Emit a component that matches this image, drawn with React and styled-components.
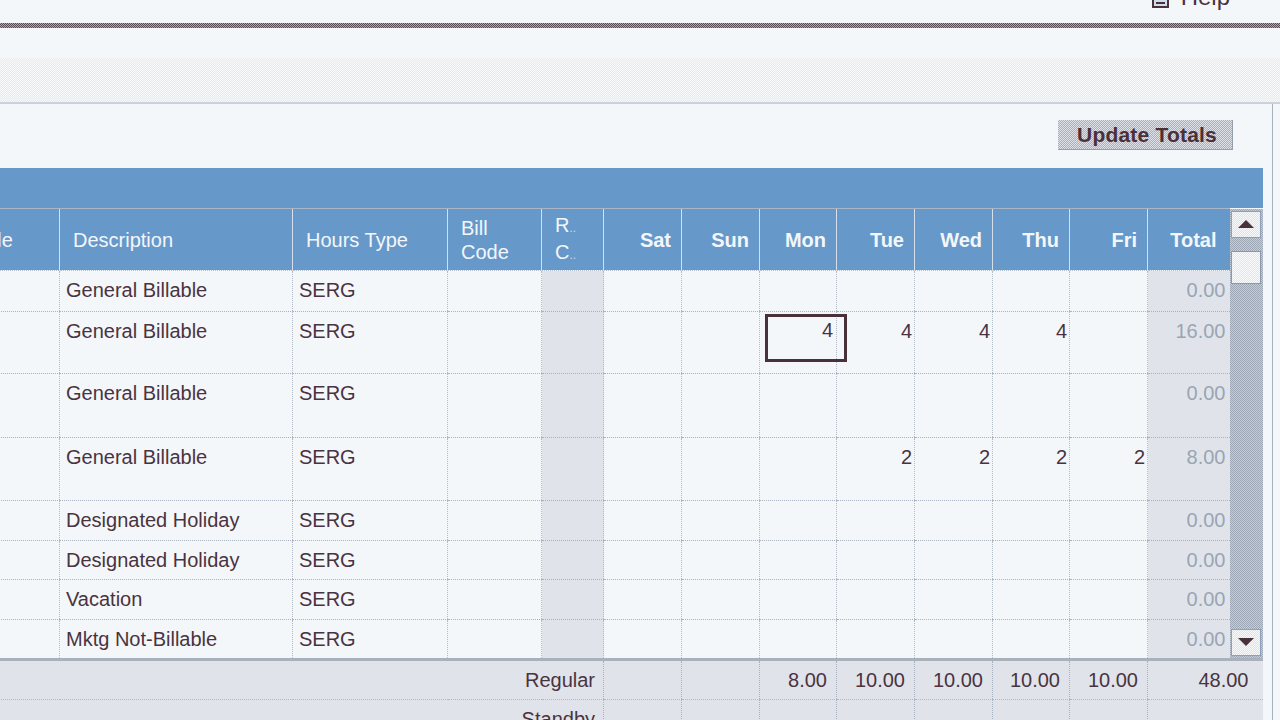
import React from 'react'
import styled, { createGlobalStyle, css } from 'styled-components'

const GlobalStyle = createGlobalStyle`
    body {
        margin: 0;
        background: #f4f7fa;
        font-family: "Liberation Sans", Arial, sans-serif;
        color: #4a3340;
        overflow: hidden;
    }
`

// dithered look of the old screenshot: 1px checker of two colours
const stipple = (a, b) => css`
    background: repeating-conic-gradient(${a} 0 25%, ${b} 0 50%) 0 0 / 2px 2px;
`

const Page = styled.div`
    width: 1280px;
    height: 720px;
    overflow: hidden;
`

const TopBar = styled.div`
    height: 23px;
    display: flex;
    justify-content: flex-end;
    align-items: flex-start;
    padding-right: 50px;
    overflow: hidden;
`

const HelpLink = styled.a`
    display: flex;
    align-items: flex-end;
    gap: 10px;
    margin-top: -14px;
    font-size: 24px;
    line-height: 22px;
    color: #4a3340;
    text-decoration: none;

    svg {
        margin-bottom: -2px;
    }
`

const DarkRule = styled.div`
    height: 5px;
    ${stipple('#5b4a56', '#a3a9b6')}
`

const Band = styled.div`
    margin-top: 30px;
    height: 44px;
    border-bottom: 2px solid #cbd2db;
    ${stipple('#e6eaf0', '#f7f9fb')}
`

const Panel = styled.div`
    width: 1272px;
    height: 620px;
    border-right: 1px solid #a9b1bd;
    padding-top: 16px;
`

const ButtonRow = styled.div`
    display: flex;
    justify-content: flex-end;
    padding-right: 39px;
`

const UpdateButton = styled.button`
    width: 175px;
    height: 30px;
    border: none;
    border-right: 1px solid #949daa;
    border-bottom: 1px solid #949daa;
    ${stipple('#a9b1bd', '#dde1e7')}
    font-family: "Liberation Sans", Arial, sans-serif;
    font-size: 21px;
    font-weight: bold;
    letter-spacing: 0.2px;
    color: #4a3038;
    padding: 0 0 0 4px;
`

const TableWrap = styled.div`
    margin-top: 18px;
    margin-left: -49px;
    width: 1312px;
`

const TitleBand = styled.div`
    height: 40px;
    background: #6699c9;
`

const Grid = styled.table`
    width: 1311px;
    table-layout: fixed;
    border-collapse: collapse;
    font-size: 20px;
    line-height: 24px;
`

const HeadRow = styled.tr`
    height: 62px;
`

const Head = styled.th`
    background: #6699c9;
    color: #f3f6fa;
    font-weight: ${p => (p.$bold ? 'bold' : 'normal')};
    text-align: ${p => (p.$right ? 'right' : 'left')};
    padding: ${p => (p.$right ? '0 10px 0 0' : '0 0 0 13px')};
    border-top: 1px solid #aab6c6;
    border-left: 1px solid #d4dfeb;
    border-bottom: 1px dotted #b6c2d2;
    vertical-align: middle;
    white-space: nowrap;
    overflow: hidden;
`

const Trunc = styled.span`
    font-size: 12px;
    color: #c9d6e6;
`

const Row = styled.tr`
    height: ${p => p.$h}px;
`

const Cell = styled.td`
    vertical-align: top;
    padding: 7px ${p => (p.$right ? '2px' : '0')} 0 6px;
    text-align: ${p => (p.$right ? 'right' : 'left')};
    border-left: 1px dotted #b3bbc7;
    border-bottom: 1px dotted #a9b2bf;
    white-space: nowrap;
    ${p => p.$shade && stipple('#ccd2db', '#f3f6f9')}
    color: ${p => (p.$muted ? '#9aa5b4' : '#4a3340')};
`

const InputCell = styled.td`
    vertical-align: top;
    padding: 2px 0 0 5px;
    border-left: 1px dotted #b3bbc7;
    border-bottom: 1px dotted #a9b2bf;
`

const HoursInput = styled.input`
    box-sizing: border-box;
    width: 82px;
    height: 48px;
    border: 3px solid #4a3038;
    padding: 2px 11px 16px 0;
    text-align: right;
    font-family: "Liberation Sans", Arial, sans-serif;
    font-size: 20px;
    line-height: 24px;
    color: #4a3340;
    background: transparent;
    outline: none;
`

const ScrollCell = styled.td`
    padding: 0;
    vertical-align: top;
    ${stipple('#9ea7b5', '#c5ccd6')}
`

const ScrollBar = styled.div`
    height: 449px;
    display: flex;
    flex-direction: column;
    padding: 2px 2px 2px 1px;
    box-sizing: border-box;
`

const ScrollButton = styled.div`
    height: 27px;
    box-sizing: border-box;
    border: 1px solid #8aa0bd;
    ${stipple('#dde2e9', '#f7f9fb')}
    display: flex;
    align-items: center;
    justify-content: center;
`

const Arrow = styled.div`
    width: 0;
    height: 0;
    border-left: 8px solid transparent;
    border-right: 8px solid transparent;
    ${p => (p.$down ? 'border-top: 8px solid #4a3038;' : 'border-bottom: 8px solid #4a3038;')}
`

const Thumb = styled.div`
    margin-top: 13px;
    height: 33px;
    box-sizing: border-box;
    border: 1px solid #8c99ab;
    ${stipple('#e2e6ec', '#f7f9fb')}
`

const Track = styled.div`
    flex: 1;
`

const FootRow = styled.tr`
    height: 40px;
`

const Foot = styled.td`
    vertical-align: top;
    text-align: right;
    padding: 7px ${p => p.$pad || 9}px 0 0;
    border-left: 1px dotted #a9b2bf;
    border-bottom: 1px dotted #b0b8c4;
    border-top: ${p => (p.$first ? '3px solid #a9b1bd' : 'none')};
    ${stipple('#cdd3dc', '#f2f5f8')}
`

const days = ['Sat', 'Sun', 'Mon', 'Tue', 'Wed', 'Thu', 'Fri']

const rows = [
    { desc: 'General Billable', h: 40, hours: {}, total: '0.00' },
    { desc: 'General Billable', h: 62, hours: { Mon: 'input', Tue: '4', Wed: '4', Thu: '4' }, total: '16.00' },
    { desc: 'General Billable', h: 64, hours: {}, total: '0.00' },
    { desc: 'General Billable', h: 62, hours: { Tue: '2', Wed: '2', Thu: '2', Fri: '2' }, total: '8.00' },
    { desc: 'Designated Holiday', h: 40, hours: {}, total: '0.00' },
    { desc: 'Designated Holiday', h: 39, hours: {}, total: '0.00' },
    { desc: 'Vacation', h: 40, hours: {}, total: '0.00' },
    { desc: 'Mktg Not-Billable', h: 39, hours: {}, total: '0.00' },
]

const widths = [108, 233, 155, 94, 62, 78, 78, 77, 78, 78, 77, 78, 82, 33]

const HelpIcon = () => (
    <svg width="20" height="22" viewBox="0 0 20 22">
        <rect x="2" y="1" width="15" height="18" fill="#cfdcec" stroke="#4a3038" strokeWidth="2" />
        <path d="M5 6h9M5 10h9M5 15h9" stroke="#4a3038" strokeWidth="2" />
    </svg>
)

const App = () => {
    return (
        <Page>
            <GlobalStyle />
            <TopBar>
                <HelpLink href="#">
                    <HelpIcon />
                    Help
                </HelpLink>
            </TopBar>
            <DarkRule />
            <Band />
            <Panel>
                <ButtonRow>
                    <UpdateButton>Update Totals</UpdateButton>
                </ButtonRow>
                <TableWrap>
                    <TitleBand />
                    <Grid>
                        <colgroup>
                            {widths.map((w, i) => <col key={i} style={{ width: w }} />)}
                        </colgroup>
                        <tbody>
                            <HeadRow>
                                <Head>Code</Head>
                                <Head>Description</Head>
                                <Head>Hours Type</Head>
                                <Head>Bill<br />Code</Head>
                                <Head>R<Trunc>..</Trunc><br />C<Trunc>..</Trunc></Head>
                                {days.map(d => <Head key={d} $right $bold>{d}</Head>)}
                                <Head $right $bold style={{ paddingRight: 13 }}>Total</Head>
                                <ScrollCell rowSpan={rows.length + 1}>
                                    <ScrollBar>
                                        <ScrollButton><Arrow /></ScrollButton>
                                        <Thumb />
                                        <Track />
                                        <ScrollButton><Arrow $down /></ScrollButton>
                                    </ScrollBar>
                                </ScrollCell>
                            </HeadRow>
                            {rows.map((r, i) => (
                                <Row key={i} $h={r.h}>
                                    <Cell />
                                    <Cell>{r.desc}</Cell>
                                    <Cell>SERG</Cell>
                                    <Cell />
                                    <Cell $shade />
                                    {days.map(d => r.hours[d] === 'input'
                                        ? <InputCell key={d}><HoursInput defaultValue="4" /></InputCell>
                                        : <Cell key={d} $right>{r.hours[d] || ''}</Cell>)}
                                    <Cell $right $shade $muted style={{ paddingRight: 4 }}>{r.total}</Cell>
                                </Row>
                            ))}
                            <FootRow>
                                <Foot colSpan={5} $first $pad={8}>Regular</Foot>
                                <Foot $first />
                                <Foot $first />
                                <Foot $first>8.00</Foot>
                                <Foot $first>10.00</Foot>
                                <Foot $first>10.00</Foot>
                                <Foot $first>10.00</Foot>
                                <Foot $first>10.00</Foot>
                                <Foot colSpan={2} $first $pad={14}>48.00</Foot>
                            </FootRow>
                            <FootRow>
                                <Foot colSpan={5} $pad={8}>Standby</Foot>
                                <Foot />
                                <Foot />
                                <Foot />
                                <Foot />
                                <Foot />
                                <Foot />
                                <Foot />
                                <Foot colSpan={2} />
                            </FootRow>
                        </tbody>
                    </Grid>
                </TableWrap>
            </Panel>
        </Page>
    )
}

export default App
